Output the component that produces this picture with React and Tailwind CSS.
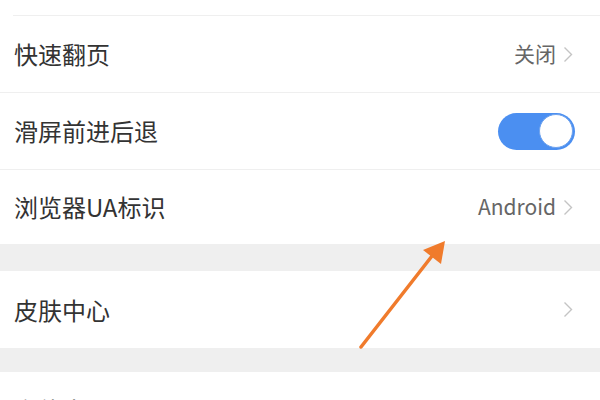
import React from 'react';

const FONT = { fontFamily: '"Noto Sans CJK SC", "Noto Sans", sans-serif' };

function Chevron() {
  return (
    <svg width="10" height="17" viewBox="0 0 10 17" className="ml-[7px]">
      <path d="M1.5 1.5 L8.5 8.5 L1.5 15.5" fill="none" stroke="#c4c4c4" strokeWidth="1.4" />
    </svg>
  );
}

function Toggle() {
  return (
    <div className="w-[77px] h-[37px] rounded-full bg-[#4b8ff1] flex items-center justify-end pr-[2px]">
      <div className="w-[34px] h-[34px] rounded-full bg-white border border-[#6fa3ee]" />
    </div>
  );
}

function Row({ label, value, toggle, chevron = true, h = 'h-[77px]', divider = true }) {
  return (
    <div className={`${h} flex items-center pl-[14px] pr-[27px] ${divider ? 'border-b border-[#efefef]' : ''}`}>
      <span className="flex-1 text-[24px] text-[#333]">{label}</span>
      {toggle ? (
        <div className="-mr-[2px]"><Toggle /></div>
      ) : (
        <div className="flex items-center">
          {value && <span className="text-[21px] text-[#666]">{value}</span>}
          {chevron && <Chevron />}
        </div>
      )}
    </div>
  );
}

export default function App() {
  return (
    <div className="relative w-[600px] h-[400px] overflow-hidden bg-white" style={FONT}>
      <div className="h-[16px] ml-[13px] border-b border-[#efefef]" />
      <div className="flex flex-col">
        <Row label="快速翻页" value="关闭" />
        <Row label="滑屏前进后退" toggle />
        <Row label="浏览器UA标识" value="Android" h="h-[74px]" divider={false} />
        <div className="h-[27px] bg-[#efefef]" />
        <Row label="皮肤中心" h="h-[77px]" divider={false} />
        <div className="h-[24px] bg-[#efefef]" />
        <Row label="字体大小" h="h-[76px]" divider={false} />
      </div>

      {/* annotation arrow */}
      <svg className="absolute left-0 top-0 pointer-events-none" width="600" height="400">
        <line x1="361" y1="347" x2="432" y2="256" stroke="#f07b2c" strokeWidth="3.5" strokeLinecap="round" />
        <polygon points="445,241 441,264 423,250" fill="#f07b2c" />
      </svg>
    </div>
  );
}
